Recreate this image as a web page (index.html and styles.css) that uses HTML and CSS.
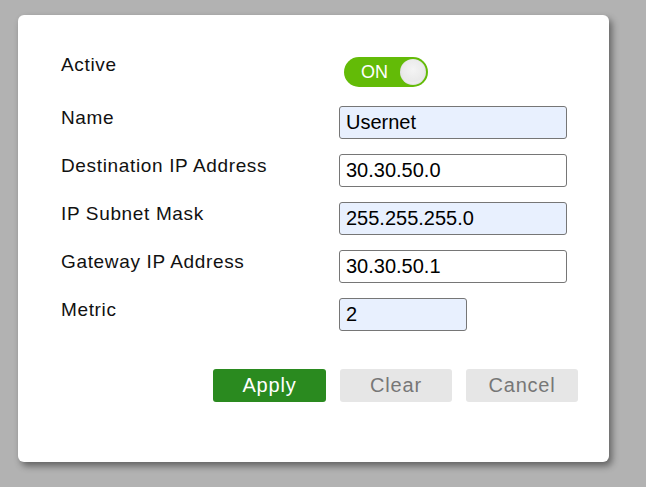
FILE: index.html
```html
<!DOCTYPE html>
<html lang="en">

<head>
    <meta charset="UTF-8">
    <meta name="viewport" content="width=device-width, initial-scale=1.0">
    <title>Static Route</title>
    <link rel="stylesheet" href="styles.css">
</head>

<body>
    <div class="dialog">
        <form class="route-form">
            <div class="field-row">
                <label class="field-label">Active</label>
                <div class="toggle">
                    <span class="toggle-text">ON</span>
                    <span class="toggle-knob"></span>
                </div>
            </div>
            <div class="field-row">
                <label class="field-label">Name</label>
                <input class="field-input filled" type="text" value="Usernet">
            </div>
            <div class="field-row">
                <label class="field-label">Destination IP Address</label>
                <input class="field-input" type="text" value="30.30.50.0">
            </div>
            <div class="field-row">
                <label class="field-label">IP Subnet Mask</label>
                <input class="field-input filled" type="text" value="255.255.255.0">
            </div>
            <div class="field-row">
                <label class="field-label">Gateway IP Address</label>
                <input class="field-input" type="text" value="30.30.50.1">
            </div>
            <div class="field-row">
                <label class="field-label">Metric</label>
                <input class="field-input filled short" type="text" value="2">
            </div>
            <div class="button-row">
                <button type="button" class="btn btn-apply">Apply</button>
                <button type="button" class="btn btn-grey">Clear</button>
                <button type="button" class="btn btn-grey">Cancel</button>
            </div>
        </form>
    </div>
</body>

</html>
```

FILE: styles.css
```css
body {
    margin: 0;
    padding: 15px 0 0 18px;
    background-color: #b2b2b2;
    font-family: "Liberation Sans", Arial, sans-serif;
    height: 487px;
    box-sizing: border-box;
}

.dialog {
    width: 591px;
    height: 447px;
    box-sizing: border-box;
    background-color: #ffffff;
    border-radius: 6px;
    box-shadow: 3px 4px 7px rgba(0, 0, 0, 0.45);
    padding: 42px 0 0 43px;
}

.route-form {
    display: flex;
    flex-direction: column;
    gap: 15px;
}

.field-row {
    display: grid;
    grid-template-columns: 278px auto;
    align-items: start;
}

.field-row:first-child {
    margin-bottom: 4px;
}

.field-label {
    font-size: 19px;
    color: #111111;
    line-height: 20px;
    padding-top: 2px;
    letter-spacing: 0.65px;
}

.field-row:first-child .field-label {
    padding-top: 0;
    margin-top: -2px;
}

.toggle {
    margin-left: 5px;
    width: 84px;
    height: 30px;
    box-sizing: border-box;
    border-radius: 15px;
    background-color: #63bb07;
    display: flex;
    align-items: center;
    justify-content: space-between;
    padding: 0 2px 0 17px;
}

.toggle-text {
    color: #ffffff;
    font-size: 18px;
}

.toggle-knob {
    width: 26px;
    height: 26px;
    border-radius: 50%;
    background: radial-gradient(circle at 50% 40%, #f4f4f4 0%, #e9e9e9 60%, #ffffff 75%);
    box-shadow: inset 0 -1px 2px rgba(0, 0, 0, 0.15);
}

.field-input {
    width: 228px;
    height: 33px;
    box-sizing: border-box;
    border: 1px solid #767676;
    border-radius: 3px;
    padding: 0 6px;
    font-family: "Liberation Sans", Arial, sans-serif;
    font-size: 20px;
    color: #000000;
    background-color: #ffffff;
    outline: none;
}

.field-input.filled {
    background-color: #e8f0fe;
}

.field-input.short {
    width: 128px;
}

.button-row {
    display: flex;
    gap: 14px;
    margin-top: 23px;
    padding-left: 152px;
}

.btn {
    width: 113px;
    height: 33px;
    border: none;
    border-radius: 3px;
    font-family: "Liberation Sans", Arial, sans-serif;
    font-size: 20px;
    letter-spacing: 0.8px;
    padding: 0;
}

.btn-apply {
    background-color: #2a8a1f;
    color: #ffffff;
}

.btn-grey {
    background-color: #e6e6e6;
    color: #777777;
    width: 112px;
}
```
